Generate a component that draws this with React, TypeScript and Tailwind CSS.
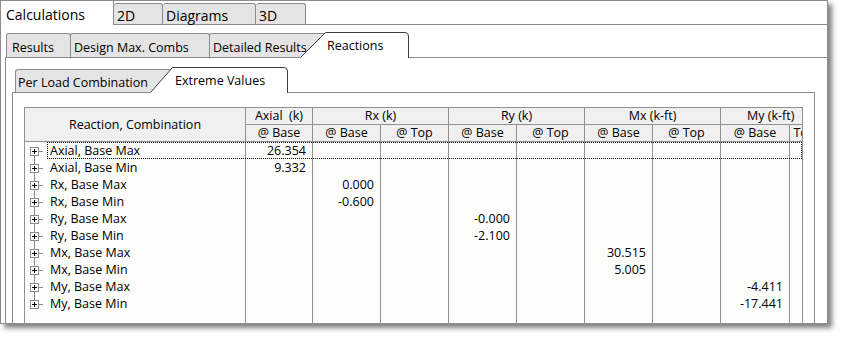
const COLS = ['w-[67px]', 'w-[68px]', 'w-[68px]', 'w-[68px]', 'w-[68px]', 'w-[68px]', 'w-[68px]', 'w-[69px]', 'w-[68px]'];

// col index: 0 Axial@Base, 1 Rx@Base, 2 Rx@Top, 3 Ry@Base, 4 Ry@Top, 5 Mx@Base, 6 Mx@Top, 7 My@Base, 8 My@Top
const rows = [
  { name: 'Axial, Base Max', col: 0, value: '26.354' },
  { name: 'Axial, Base Min', col: 0, value: '9.332' },
  { name: 'Rx, Base Max', col: 1, value: '0.000' },
  { name: 'Rx, Base Min', col: 1, value: '-0.600' },
  { name: 'Ry, Base Max', col: 3, value: '-0.000' },
  { name: 'Ry, Base Min', col: 3, value: '-2.100' },
  { name: 'Mx, Base Max', col: 5, value: '30.515' },
  { name: 'Mx, Base Min', col: 5, value: '5.005' },
  { name: 'My, Base Max', col: 7, value: '-4.411' },
  { name: 'My, Base Min', col: 7, value: '-17.441' },
];

const TreeIcon = ({ first, last }: { first: boolean; last: boolean }) => (
  <svg width="25" height="17" className="shrink-0" shapeRendering="crispEdges">
    {!first && <line x1="9.5" y1="0" x2="9.5" y2="5" stroke="#8e8e8e" />}
    {!last && <line x1="9.5" y1="14" x2="9.5" y2="17" stroke="#8e8e8e" />}
    <rect x="5.5" y="5.5" width="8" height="8" fill="#fff" stroke="#8e8e8e" />
    <line x1="7" y1="9.5" x2="12" y2="9.5" stroke="#000" />
    <line x1="9.5" y1="7" x2="9.5" y2="12" stroke="#000" />
    <line x1="14" y1="9.5" x2="18" y2="9.5" stroke="#8e8e8e" />
  </svg>
);

const TopTab = ({ w, label }: { w: string; label: string }) => (
  <div className={`${w} h-[21px] shrink-0 rounded-t-[3px] border-t border-r border-[#8c8c8c] bg-[#e4e4e4] pl-[3px] pt-[2px] whitespace-nowrap`}>
    {label}
  </div>
);

const GroupHead = ({ label, widths }: { label: string; widths: string[] }) => (
  <div className="flex flex-col shrink-0">
    <div className="h-[17px] border-r border-b border-[#919191] bg-[#f0f0f0] flex items-center justify-center whitespace-pre leading-[16px]">
      {label}
    </div>
    <div className="flex">
      {widths.map((w, i) => (
        <div
          key={i}
          className={`${w} h-[17px] shrink-0 border-r border-b border-[#919191] bg-[#f0f0f0] flex items-center justify-center whitespace-nowrap leading-[16px]`}
        >
          {i === 0 ? '@ Base' : '@ Top'}
        </div>
      ))}
    </div>
  </div>
);

export default function App() {
  return (
    <div className="w-[843px] h-[339px] bg-white text-black font-['Open_Sans',sans-serif]">
      <div className="w-[828px] h-[324px] flex flex-col overflow-hidden border border-[#8c8c8c] bg-white shadow-[4px_4px_5px_rgba(0,0,0,0.5)]">
        {/* Top tabs */}
        <div className="relative z-10 flex items-end h-[23px] shrink-0 text-[14px] leading-[19px]">
          <div className="w-[113px] h-[24px] -mb-px shrink-0 bg-white border-r border-[#8c8c8c] pl-[5px] pt-[4px]">
            Calculations
          </div>
          <TopTab w="w-[49px]" label="2D" />
          <TopTab w="w-[93px]" label="Diagrams" />
          <TopTab w="w-[50px]" label="3D" />
        </div>

        {/* Calculations panel */}
        <div className="flex-1 min-h-0 flex flex-col border-t border-[#8c8c8c] pl-[4px] pt-[7px] text-[12.5px] leading-[17px]">
          {/* Second level tabs */}
          <div className="relative z-10 flex items-end h-[25px] shrink-0 pl-[1px]">
            <div className="w-[65px] h-[24px] shrink-0 rounded-t-[3px] border-l border-t border-r border-[#8c8c8c] bg-[#e4e4e4] pl-[5px] pt-[5px] whitespace-nowrap">
              Results
            </div>
            <div className="w-[140px] h-[24px] -ml-px shrink-0 rounded-t-[3px] border-l border-t border-r border-[#8c8c8c] bg-[#e4e4e4] pl-[3px] pt-[5px] whitespace-nowrap">
              Design Max. Combs
            </div>
            <div className="w-[126px] h-[24px] -ml-px shrink-0 rounded-t-[3px] border-l border-t border-r border-[#8c8c8c] bg-[#e4e4e4] pl-[3px] pt-[5px] whitespace-nowrap">
              Detailed Results
            </div>
            <div className="relative w-[110px] h-[26px] -mb-px -ml-[35px] shrink-0 pl-[27px] pt-[5px] whitespace-nowrap">
              <svg className="absolute inset-0" width="110" height="26">
                <path d="M0.5 25.5 L25.5 0.5 H105 Q108.5 0.5 108.5 4 V26 H0.5 Z" fill="#fff" />
                <path d="M0.5 25.5 L25.5 0.5 H105 Q108.5 0.5 108.5 4 V26" fill="none" stroke="#3c3c3c" />
              </svg>
              <span className="relative">Reactions</span>
            </div>
          </div>

          {/* Reactions panel */}
          <div className="flex-1 min-h-0 flex flex-col border-t border-l border-[#8c8c8c] bg-white pl-[6px] pt-[9px]">
            <div className="relative z-10 flex items-end h-[25px] shrink-0 pl-[3px]">
              <div className="w-[160px] h-[23px] shrink-0 rounded-tl-[3px] border-l border-t border-[#8c8c8c] bg-[#e4e4e4] pl-[2px] pt-[4px] whitespace-nowrap">
                Per Load Combination
              </div>
              <div className="relative w-[139px] h-[26px] -mb-px -ml-[25px] shrink-0 pl-[25px] pt-[5px] whitespace-nowrap">
                <svg className="absolute inset-0" width="139" height="26">
                  <path d="M0.5 25.5 L22.5 0.5 H134 Q137.5 0.5 137.5 4 V26 H0.5 Z" fill="#fff" />
                  <path d="M0.5 25.5 L22.5 0.5 H134 Q137.5 0.5 137.5 4 V26" fill="none" stroke="#3c3c3c" />
                </svg>
                <span className="relative">Extreme Values</span>
              </div>
            </div>

            {/* Extreme values panel */}
            <div className="w-[803px] flex-1 min-h-0 flex flex-col border-l border-t border-r border-[#8c8c8c] bg-white pl-[11px] pt-[14px]">
              <div className="w-[779px] flex-1 min-h-0 flex flex-col overflow-hidden border-l border-t border-r border-[#919191] bg-[#fdfdfb]">
                {/* Header */}
                <div className="flex shrink-0">
                  <div className="w-[221px] h-[34px] shrink-0 border-r border-b border-[#919191] bg-[#f0f0f0] flex items-center justify-center whitespace-nowrap">
                    Reaction, Combination
                  </div>
                  <div className="flex flex-col shrink-0">
                    <div className="h-[17px] border-r border-b border-[#919191] bg-[#f0f0f0] flex items-center justify-center whitespace-pre leading-[16px]">
                      {'Axial  (k)'}
                    </div>
                    <div className="w-[67px] h-[17px] border-r border-b border-[#919191] bg-[#f0f0f0] flex items-center justify-center whitespace-nowrap leading-[16px]">
                      @ Base
                    </div>
                  </div>
                  <GroupHead label="Rx (k)" widths={['w-[68px]', 'w-[68px]']} />
                  <GroupHead label="Ry (k)" widths={['w-[68px]', 'w-[68px]']} />
                  <GroupHead label="Mx (k-ft)" widths={['w-[68px]', 'w-[68px]']} />
                  <div className="flex flex-col shrink-0">
                    <div className="h-[17px] border-r border-b border-[#919191] bg-[#f0f0f0] flex items-center pl-[26px] whitespace-nowrap leading-[16px]">
                      My (k-ft)
                    </div>
                    <div className="flex">
                      <div className="w-[69px] h-[17px] shrink-0 border-r border-b border-[#919191] bg-[#f0f0f0] flex items-center justify-center whitespace-nowrap leading-[16px]">
                        @ Base
                      </div>
                      <div className="w-[68px] h-[17px] shrink-0 overflow-hidden border-r border-b border-[#919191] bg-[#f0f0f0] flex items-center whitespace-nowrap leading-[16px]">
                        <span className="-ml-[11px]">@ Top</span>
                      </div>
                    </div>
                  </div>
                </div>

                {/* Body */}
                {rows.map((r, i) => (
                  <div key={r.name} className="relative flex h-[17px] shrink-0">
                    <div className="w-[221px] shrink-0 border-r border-[#919191] flex items-center whitespace-nowrap">
                      <TreeIcon first={i === 0} last={i === rows.length - 1} />
                      <span>{r.name}</span>
                    </div>
                    {COLS.map((w, c) => (
                      <div key={c} className={`${w} shrink-0 border-r border-[#919191] text-right pr-[6px] whitespace-nowrap`}>
                        {c === r.col ? r.value : ''}
                      </div>
                    ))}
                    {i === 0 && (
                      <div className="absolute left-[22px] right-0 inset-y-0 border border-dotted border-black" />
                    )}
                  </div>
                ))}
                <div className="flex flex-1 min-h-0">
                  <div className="w-[221px] shrink-0 border-r border-[#919191]" />
                  {COLS.map((w, c) => (
                    <div key={c} className={`${w} shrink-0 border-r border-[#919191]`} />
                  ))}
                </div>
              </div>
            </div>
          </div>
        </div>
      </div>
    </div>
  );
}
